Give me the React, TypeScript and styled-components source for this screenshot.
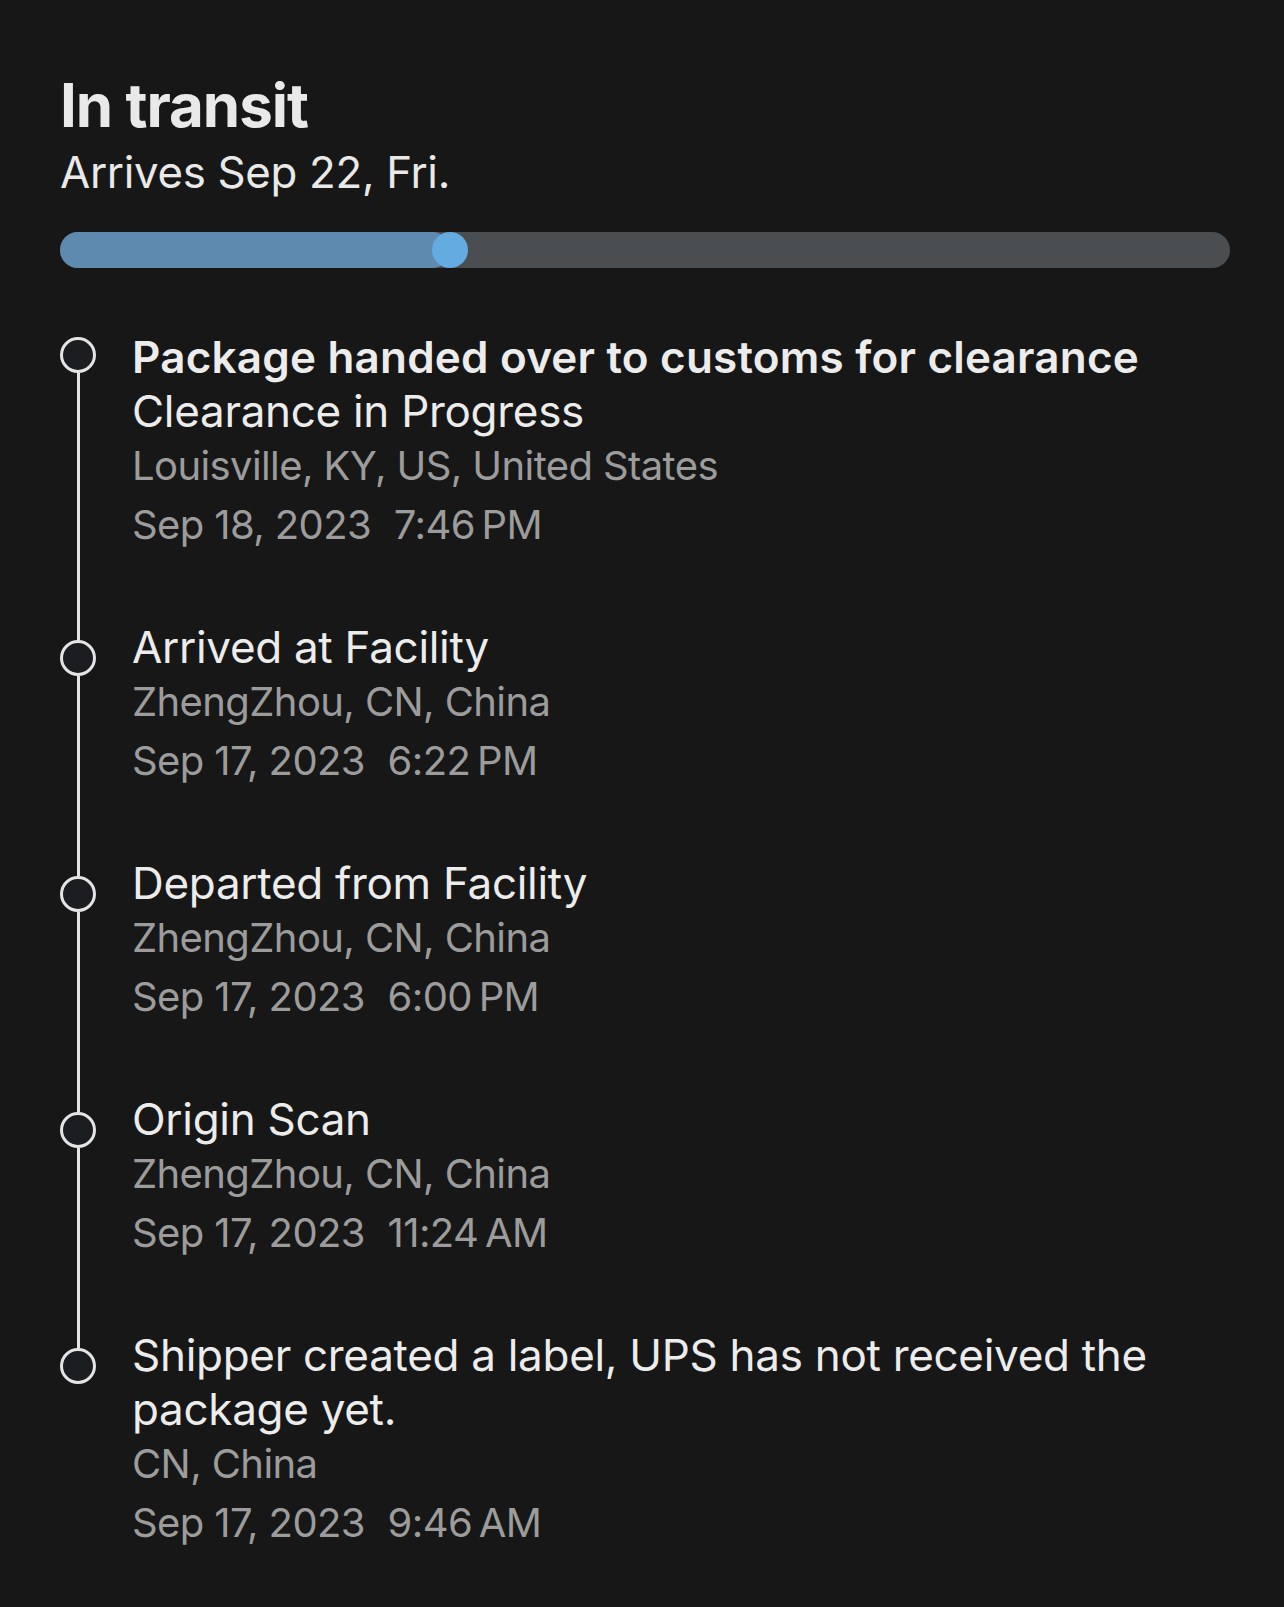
import styled, { createGlobalStyle } from 'styled-components';

const GlobalStyle = createGlobalStyle`
  html, body {
    margin: 0;
    padding: 0;
    background: #171717;
  }

  body {
    font-family: Inter, 'Noto Sans', sans-serif;
    -webkit-font-smoothing: antialiased;
  }
`;

const Page = styled.main`
  min-height: 1607px;
  padding: 69px 54px 0 60px;
  box-sizing: border-box;

  background: #171717;
  color: #e9e9e9;
`;

const Heading = styled.h1`
  margin: 0;

  font-size: 60px;
  font-weight: 700;
  line-height: 72px;
  letter-spacing: -1px;
`;

const Eta = styled.div`
  margin-top: 4px;

  font-size: 43.8px;
  font-weight: 400;
  line-height: 56px;
  letter-spacing: -0.3px;
`;

const Track = styled.div`
  position: relative;
  height: 36px;
  margin-top: 31px;

  border-radius: 18px;
  background: #4a4e51;
`;

const Fill = styled.div`
  display: flex;
  justify-content: flex-end;

  height: 100%;

  border-radius: 18px;
  background: #5d8aae;
`;

const Knob = styled.span`
  width: 36px;
  height: 36px;
  margin-right: -18px;

  border-radius: 50%;
  background: #63abe0;
`;

const Timeline = styled.ol`
  margin: 62px 0 0;
  padding: 0;

  list-style: none;
`;

const Event = styled.li`
  display: flex;
  gap: 36px;
`;

const Marker = styled.div`
  display: flex;
  flex-direction: column;
  align-items: center;
  flex: none;

  width: 36px;
`;

const Line = styled.span<{ $hidden?: boolean; $height?: number }>`
  width: 3px;
  background: ${(p) => (p.$hidden ? 'transparent' : '#e4e4e4')};

  ${(p) => (p.$height !== undefined ? `height: ${p.$height}px;` : 'flex: 1;')}
`;

const Dot = styled.span`
  flex: none;

  width: 36px;
  height: 36px;
  box-sizing: border-box;

  border: 3px solid #e4e4e4;
  border-radius: 50%;
  background: #1c1d20;
`;

const Body = styled.div`
  flex: 1;
  padding-bottom: 64px;
`;

const Title = styled.div<{ $strong?: boolean }>`
  font-size: 44px;
  line-height: 54px;
  letter-spacing: ${(p) => (p.$strong ? '0.2px' : '-0.3px')};
  font-weight: ${(p) => (p.$strong ? 600 : 400)};
  color: #ececec;
`;

const Place = styled.div`
  font-size: 40px;
  line-height: 56px;
  letter-spacing: -0.6px;
  color: #9c9c9c;
`;

const When = styled.div`
  font-size: 40px;
  line-height: 62px;
  letter-spacing: -0.6px;
  color: #9c9c9c;
`;

const Time = styled.span`
  margin-left: 12px;
`;

interface ITrackEvent {
  title: string;
  status?: string;
  place: string;
  date: string;
  time: string;
}

const events: ITrackEvent[] = [
  {
    title: 'Package handed over to customs for clearance',
    status: 'Clearance in Progress',
    place: 'Louisville, KY, US, United States',
    date: 'Sep 18, 2023',
    time: '7:46\u202FPM',
  },
  { title: 'Arrived at Facility', place: 'ZhengZhou, CN, China', date: 'Sep 17, 2023', time: '6:22\u202FPM' },
  { title: 'Departed from Facility', place: 'ZhengZhou, CN, China', date: 'Sep 17, 2023', time: '6:00\u202FPM' },
  { title: 'Origin Scan', place: 'ZhengZhou, CN, China', date: 'Sep 17, 2023', time: '11:24\u202FAM' },
  {
    title: 'Shipper created a label, UPS has not received the package yet.',
    place: 'CN, China',
    date: 'Sep 17, 2023',
    time: '9:46\u202FAM',
  },
];

const progress = 0.333;

export default function App() {
  return (
    <>
      <GlobalStyle />
      <Page>
        <Heading>In transit</Heading>
        <Eta>Arrives Sep 22, Fri.</Eta>
        <Track>
          <Fill style={{ width: `${progress * 100}%` }}>
            <Knob />
          </Fill>
        </Track>

        <Timeline>
          {events.map((ev, i) => {
            const first = i === 0;
            const last = i === events.length - 1;
            return (
              <Event key={ev.title}>
                <Marker>
                  <Line $hidden={first} $height={first ? 7 : 20} />
                  <Dot />
                  <Line $hidden={last} />
                </Marker>
                <Body>
                  <Title $strong={first}>{ev.title}</Title>
                  {ev.status && <Title>{ev.status}</Title>}
                  <Place>{ev.place}</Place>
                  <When>
                    {ev.date} <Time>{ev.time}</Time>
                  </When>
                </Body>
              </Event>
            );
          })}
        </Timeline>
      </Page>
    </>
  );
}
